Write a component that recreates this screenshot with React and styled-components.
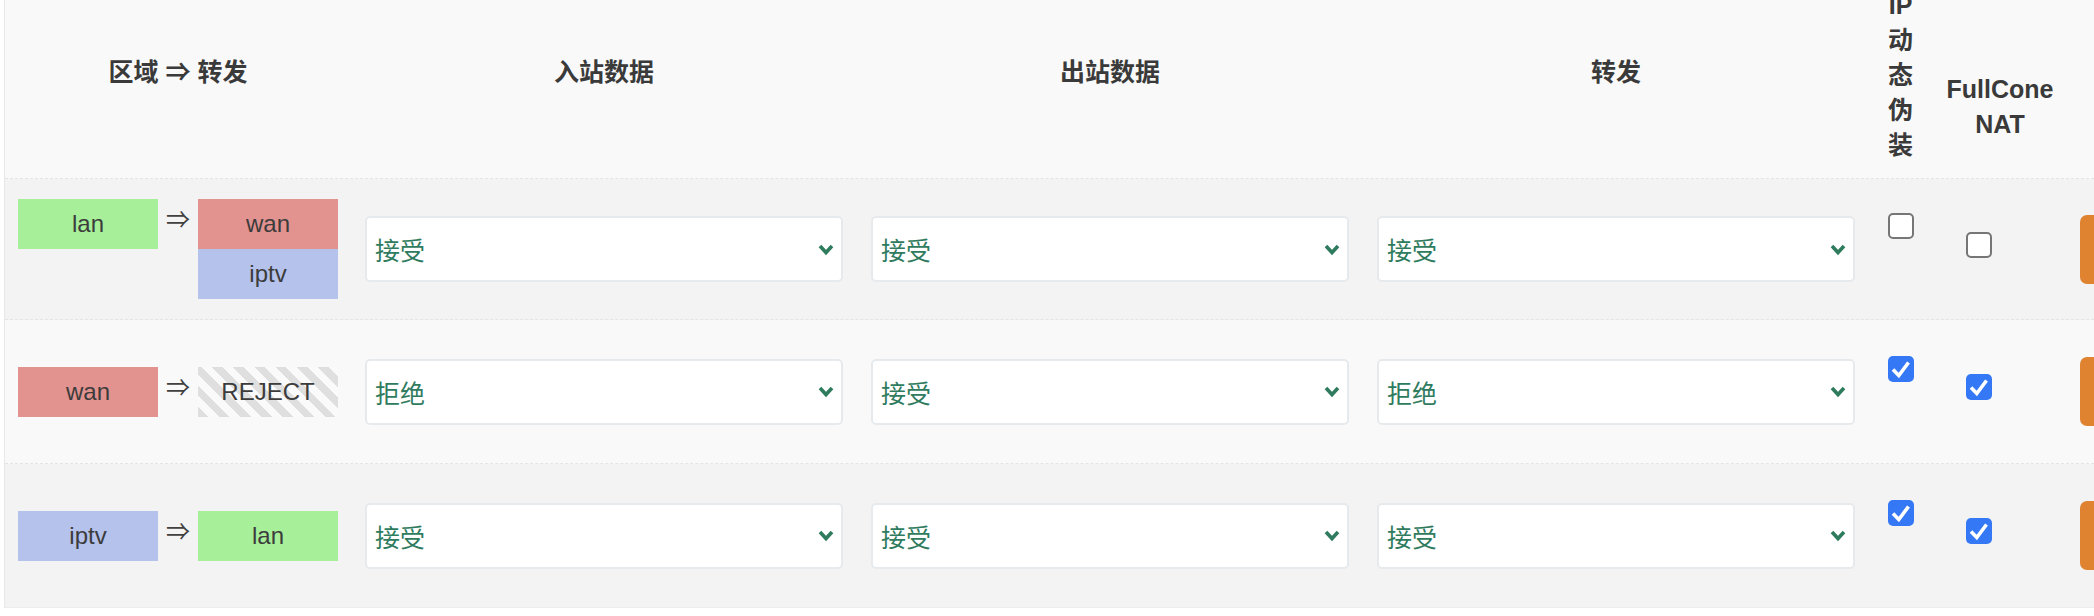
import React from 'react';
import styled, { createGlobalStyle } from 'styled-components';

const GlobalStyle = createGlobalStyle`
  html, body {
    margin: 0;
    padding: 0;
    background: #fff;
    overflow: hidden;
  }
  body {
    font-family: "Liberation Sans", "Noto Sans CJK SC", sans-serif;
    color: #404040;
  }
`;

const zoneColors = {
  lan: '#a7ef99',
  wan: '#e3938f',
  iptv: '#b4c2ec'
};

const cols = '346px 506px 506px 506px 63px 136px 1fr';

// the page is scrolled a little: the top of the header is out of view
const Page = styled.div`
  margin-top: -12px;
  padding-left: 4px;
  width: 2200px;
`;

const Table = styled.div`
  border-left: 1px solid #e8e8e8;
`;

const HeadRow = styled.div`
  display: grid;
  grid-template-columns: ${cols};
  height: 191px;
  box-sizing: border-box;
  background: #f9f9f9;
  border-bottom: 1px dashed #e4e4e4;
`;

const Th = styled.div`
  display: flex;
  flex-direction: column;
  justify-content: ${p => p.$top ? 'flex-start' : 'center'};
  box-sizing: border-box;
  padding: ${p => p.$pad || '0 0 22px 0'};
  text-align: center;
  font-size: 25px;
  font-weight: bold;
  line-height: 35px;
  color: #3a3a3a;
`;

const Row = styled.div`
  display: grid;
  grid-template-columns: ${cols};
  align-items: center;
  height: ${p => p.$h}px;
  box-sizing: border-box;
  background: ${p => p.$bg};
  border-bottom: ${p => p.$last ? '1px solid #ececec' : '1px dashed #e4e4e4'};
`;

const ZoneCell = styled.div`
  display: flex;
  align-items: flex-start;
  padding-left: 13px;
`;

const Stack = styled.div`
  display: flex;
  flex-direction: column;
`;

const Zone = styled.div`
  width: 140px;
  height: 50px;
  line-height: 50px;
  text-align: center;
  font-size: 24px;
  color: #3c3c3c;
  background: ${p => p.$color};
`;

const Reject = styled(Zone)`
  background: repeating-linear-gradient(
    45deg,
    #dfdfdf 0 7.5px,
    #fafafa 7.5px 15px
  );
`;

const Arrow = styled.div`
  width: 40px;
  text-align: center;
  font-size: 24px;
  line-height: 42px;
  color: #404040;
`;

const SelCell = styled.div`
  padding: 0 14px;
`;

const Select = styled.div`
  display: flex;
  align-items: center;
  height: 66px;
  box-sizing: border-box;
  padding: 0 6px 0 8px;
  background: #fff;
  border: 2px solid #e6eaed;
  border-radius: 5px;
  font-size: 25px;
  color: #2f7b5e;

  svg {
    margin-left: auto;
  }
`;

const CheckCell = styled.div`
  display: flex;
  justify-content: ${p => p.$left ? 'flex-start' : 'center'};
  padding-left: ${p => p.$left ? '34px' : '0'};
  margin-bottom: ${p => p.$lift}px;
`;

const Box = styled.span`
  display: block;
  width: 26px;
  height: 26px;
  box-sizing: border-box;
  border-radius: 5px;
  background: ${p => p.$on ? '#3478f6' : '#fff'};
  border: ${p => p.$on ? 'none' : '2px solid #767676'};

  svg {
    display: block;
  }
`;

const BtnCell = styled.div`
  padding-left: 12px;
`;

const DelButton = styled.button`
  display: block;
  width: 110px;
  height: 69px;
  border: none;
  border-radius: 7px;
  background: #df8331;
`;

const rows = [
  { src: 'lan', dests: ['wan', 'iptv'], input: '接受', output: '接受', forward: '接受', masq: false, fullcone: false, bg: '#f3f3f3', h: 141 },
  { src: 'wan', dests: ['REJECT'], input: '拒绝', output: '接受', forward: '拒绝', masq: true, fullcone: true, bg: '#f9f9f9', h: 144 },
  { src: 'iptv', dests: ['lan'], input: '接受', output: '接受', forward: '接受', masq: true, fullcone: true, bg: '#f3f3f3', h: 144 }
];

function Chevron() {
  return (
    <svg width="18" height="13" viewBox="0 0 18 13">
      <polyline points="3,3 9,9.5 15,3" fill="none" stroke="#2f7b5e" strokeWidth="3.6" />
    </svg>
  );
}

function Check({ on }) {
  return (
    <Box $on={on}>
      {on && (
        <svg width="26" height="26" viewBox="0 0 26 26">
          <path d="M5 13.5 L10.8 19.5 L20.5 6.5" fill="none" stroke="#fff" strokeWidth="3.6" />
        </svg>
      )}
    </Box>
  );
}

function Picker({ value }) {
  return (
    <SelCell>
      <Select>
        <span>{value}</span>
        <Chevron />
      </Select>
    </SelCell>
  );
}

export default function App() {
  return (
    <Page>
      <GlobalStyle />
      <Table>
        <HeadRow>
          <Th>区域 ⇒ 转发</Th>
          <Th>入站数据</Th>
          <Th>出站数据</Th>
          <Th>转发</Th>
          <Th $top $pad="0 19px">IP动态伪装</Th>
          <Th $pad="48px 10px 0">FullCone NAT</Th>
          <Th />
        </HeadRow>
        {rows.map((r, i) => (
          <Row key={r.src} $bg={r.bg} $h={r.h} $last={i === rows.length - 1}>
            <ZoneCell>
              <Zone $color={zoneColors[r.src]}>{r.src}</Zone>
              <Arrow>⇒</Arrow>
              <Stack>
                {r.dests.map(d =>
                  d === 'REJECT'
                    ? <Reject key={d}>{d}</Reject>
                    : <Zone key={d} $color={zoneColors[d]}>{d}</Zone>
                )}
              </Stack>
            </ZoneCell>
            <Picker value={r.input} />
            <Picker value={r.output} />
            <Picker value={r.forward} />
            <CheckCell $lift={46}>
              <Check on={r.masq} />
            </CheckCell>
            <CheckCell $left $lift={9}>
              <Check on={r.fullcone} />
            </CheckCell>
            <BtnCell>
              <DelButton type="button" aria-label="删除" />
            </BtnCell>
          </Row>
        ))}
      </Table>
    </Page>
  );
}
